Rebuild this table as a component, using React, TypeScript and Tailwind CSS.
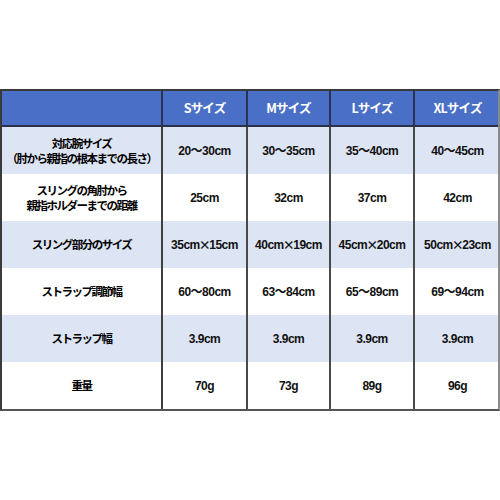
const cols = ['Sサイズ', 'Mサイズ', 'Lサイズ', 'XLサイズ'];

const rows: { label: string[]; values: string[] }[] = [
  { label: ['対応腕サイズ', '（肘から親指の根本までの長さ）'], values: ['20～30cm', '30～35cm', '35～40cm', '40～45cm'] },
  { label: ['スリングの角肘から', '親指ホルダーまでの距離'], values: ['25cm', '32cm', '37cm', '42cm'] },
  { label: ['スリング部分のサイズ'], values: ['35cm×15cm', '40cm×19cm', '45cm×20cm', '50cm×23cm'] },
  { label: ['ストラップ調節幅'], values: ['60～80cm', '63～84cm', '65～89cm', '69～94cm'] },
  { label: ['ストラップ幅'], values: ['3.9cm', '3.9cm', '3.9cm', '3.9cm'] },
  { label: ['重量'], values: ['70g', '73g', '89g', '96g'] },
];

const grid = 'grid grid-cols-[161px_85px_83px_84px_85px]';
const jp = "font-['Noto_Sans_CJK_JP',sans-serif]";
const num = "font-['Liberation_Sans','Noto_Sans_CJK_JP',sans-serif]";

// the × sign is the full-width one in the picture
function Value({ v }: { v: string }) {
  const parts = v.split('×');
  if (parts.length === 1) return <>{v}</>;
  return (
    <>
      {parts[0]}
      <span className={`${jp} -mx-[1px]`}>×</span>
      {parts[1]}
    </>
  );
}

export default function App() {
  return (
    <div className="w-[500px] h-[500px] bg-white pt-[89px]">
      <div className="w-[500px] border-2 border-[#3a3a3a] border-r-[#8a8a8a] border-b-[#555]">
        {/* header */}
        <div className={`${grid} h-[36px] bg-[#4a6fc6] border-b-2 border-[#2b2f4a]`}>
          <div className="border-r-2 border-[#2b3350]" />
          {cols.map((c, i) => (
            <div
              key={c}
              className={`flex items-center justify-center text-white font-bold text-[12.5px] tracking-[-0.8px] ${jp} ${i < 3 ? 'border-r-2 border-[#2b3350]' : ''}`}
            >
              {c}
            </div>
          ))}
        </div>

        {/* body */}
        {rows.map((r, ri) => (
          <div key={ri} className={`${grid} h-[47px] ${ri % 2 === 0 ? 'bg-[#dde4f3]' : 'bg-white'}`}>
            <div className={`flex flex-col items-center justify-center border-r-2 border-[#3f3f3f] text-black font-bold text-[11.5px] leading-[15px] tracking-[-1.5px] ${jp}`}>
              {r.label.map((l) => (
                <span key={l}>{l}</span>
              ))}
            </div>
            {r.values.map((v, i) => (
              <div
                key={i}
                className={`flex items-center justify-center text-[#111] font-bold text-[12px] tracking-[-0.5px] ${num} ${i < 3 ? 'border-r-2 border-[#4a4a4a]' : ''}`}
              >
                <Value v={v} />
              </div>
            ))}
          </div>
        ))}
      </div>
    </div>
  );
}
